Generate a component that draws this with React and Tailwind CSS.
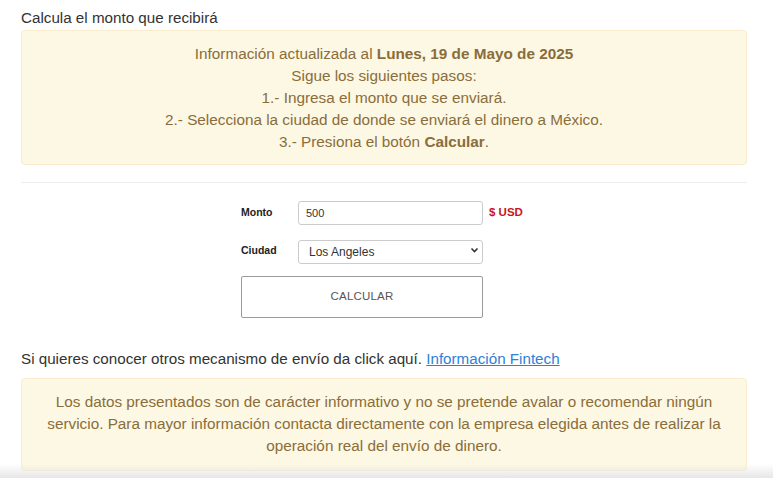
import React from "react";

const Aviso = ({ children, className = "" }) => (
  <div
    className={`bg-[#fcf8e3] border border-[#faebcc] rounded-[4px] text-[#8a6d3b] text-center text-[15.3px] leading-[22px] ${className}`}
  >
    {children}
  </div>
);

export default function App() {
  return (
    <div
      className="relative w-[773px] h-[478px] overflow-hidden bg-white text-[#333]"
      style={{ fontFamily: '"Liberation Sans", Arial, sans-serif' }}
    >
      <div className="px-[21px] pt-[7px] w-[768px]">
        <h2 className="text-[15.2px] leading-[22px] mb-[1px]">Calcula el monto que recibirá</h2>
        <Aviso className="pt-[12px] pb-[11px]">
          <p>
            Información actualizada al <b>Lunes, 19 de Mayo de 2025</b>
          </p>
          <p>Sigue los siguientes pasos:</p>
          <p>1.- Ingresa el monto que se enviará.</p>
          <p>2.- Selecciona la ciudad de donde se enviará el dinero a México.</p>
          <p>
            3.- Presiona el botón <b>Calcular</b>.
          </p>
        </Aviso>

        <div className="mt-[17px] border-t border-[#eee]" />

        <div className="flex justify-center pt-[18px]">
          <div className="w-[286px] flex flex-col">
            <div className="flex items-center h-[24px]">
              <label className="w-[57px] text-[10.5px] font-bold text-[#222]">Monto</label>
              <input
                defaultValue="500"
                className="w-[185px] h-[24px] border border-[#ccc] rounded-[3px] px-[7px] text-[11px] text-[#333] outline-none"
              />
              <span className="ml-[6px] text-[11.5px] font-bold text-[#c9141b]">$ USD</span>
            </div>
            <div className="flex items-center h-[24px] mt-[14px]">
              <label className="w-[57px] text-[10.5px] font-bold text-[#222]">Ciudad</label>
              <div className="relative w-[185px] h-[24px]">
                <select
                  defaultValue="la"
                  className="appearance-none w-full h-full border border-[#ccc] rounded-[3px] bg-white pl-[10px] text-[12px] text-[#333] outline-none"
                >
                  <option value="la">Los Angeles</option>
                  <option value="ch">Chicago</option>
                  <option value="ny">Nueva York</option>
                </select>
                <svg
                  className="pointer-events-none absolute right-[4px] top-[8px]"
                  width="9"
                  height="7"
                  viewBox="0 0 9 7"
                >
                  <path d="M1.5 1.5 L4.5 4.5 L7.5 1.5" fill="none" stroke="#333" strokeWidth="1.6" />
                </svg>
              </div>
            </div>
            <button className="mt-[13px] w-[242px] h-[42px] border border-[#9a9a9a] rounded-[2px] bg-white text-[11.5px] text-[#555] tracking-[0.2px]">
              CALCULAR
            </button>
          </div>
        </div>

        <p className="mt-[30px] text-[15.2px] leading-[22px]">
          Si quieres conocer otros mecanismo de envío da click aquí.{" "}
          <a href="#" className="text-[#2f7fd8] underline">
            Información Fintech
          </a>
        </p>

        <Aviso className="mt-[8px] pt-[12px] pb-[13px] px-[22px]">
          Los datos presentados son de carácter informativo y no se pretende avalar o recomendar ningún
          servicio. Para mayor información contacta directamente con la empresa elegida antes de realizar la
          operación real del envío de dinero.
        </Aviso>
      </div>

      <div className="pointer-events-none absolute left-0 right-0 bottom-0 h-[14px] bg-gradient-to-b from-transparent to-[#e6e6e6]" />
    </div>
  );
}
